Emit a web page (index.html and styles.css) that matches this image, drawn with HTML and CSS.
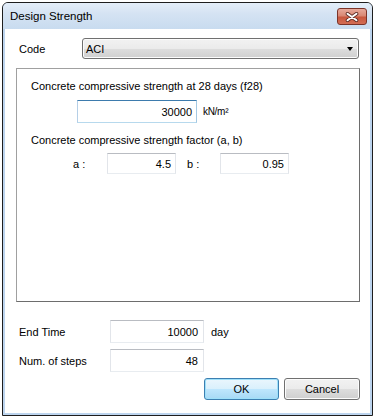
FILE: index.html
```html
<!DOCTYPE html>
<html lang="en">
<head>
<meta charset="UTF-8">
<title>Design Strength</title>
<link rel="stylesheet" href="styles.css">
</head>
<body>
<div class="window">
    <div class="titlebar">
        <span class="title">Design Strength</span>
        <div class="close">
            <svg width="14" height="10" viewBox="0 0 14 10">
                <path d="M2.5 1.8 L11.5 8.2 M11.5 1.8 L2.5 8.2" stroke="#5a2a24" stroke-width="3.6" stroke-linecap="round"/>
                <path d="M2.5 1.8 L11.5 8.2 M11.5 1.8 L2.5 8.2" stroke="#ffffff" stroke-width="2" stroke-linecap="round"/>
            </svg>
        </div>
    </div>
    <div class="client">
        <div class="code-row">
            <span class="lbl">Code</span>
            <div class="combo">
                <span>ACI</span>
                <span class="arrow"></span>
            </div>
        </div>
        <div class="group">
            <p class="caption">Concrete compressive strength at 28 days (f28)</p>
            <div class="f28-row">
                <div class="field focused">30000</div>
                <span class="unit">kN/m²</span>
            </div>
            <p class="caption second">Concrete compressive strength factor (a, b)</p>
            <div class="ab-row">
                <span class="ab-lbl">a :</span>
                <div class="field small">4.5</div>
                <span class="ab-lbl b">b :</span>
                <div class="field small">0.95</div>
            </div>
        </div>
        <div class="param-row first">
            <span class="lbl param">End Time</span>
            <div class="field wide">10000</div>
            <span class="unit-day">day</span>
        </div>
        <div class="param-row">
            <span class="lbl param">Num. of steps</span>
            <div class="field wide">48</div>
        </div>
        <div class="buttons">
            <div class="btn default">OK</div>
            <div class="btn cancel">Cancel</div>
        </div>
    </div>
</div>
</body>
</html>
```

FILE: styles.css
```css
body {
    margin: 0;
    background: #ffffff;
    font-family: "Liberation Sans", Arial, sans-serif;
    font-size: 11px;
    color: #000000;
}
.window {
    margin: 2px 0 0 2px;
    width: 371px;
    height: 414px;
    box-sizing: border-box;
    border: 1px solid #1e1e1e;
    border-radius: 6px 6px 0 0;
    background: #bcd4ee;
    display: flex;
    flex-direction: column;
    overflow: hidden;
}
.titlebar {
    height: 26px;
    flex: none;
    display: flex;
    justify-content: space-between;
    align-items: flex-start;
    padding: 0 5px 0 7px;
    background: linear-gradient(to bottom, #e4eef9 0%, #d5e3f3 40%, #c8dbef 100%);
}
.title {
    font-size: 11.5px;
    line-height: 14px;
    margin-top: 6px;
}
.close {
    margin-top: 5px;
    width: 30px;
    height: 17px;
    box-sizing: border-box;
    border: 1px solid #7b3328;
    border-radius: 3px;
    background: linear-gradient(to bottom, #e7a99b 0%, #d98874 45%, #c8573e 55%, #d36e55 100%);
    display: flex;
    justify-content: center;
    align-items: center;
}
.client {
    flex: 1;
    margin: 0 2px 2px 2px;
    background: #ffffff;
    padding: 9px 10px 0 11px;
    box-sizing: border-box;
}
.lbl {
    padding-left: 3px;
}
.code-row {
    display: flex;
    align-items: center;
}
.code-row .lbl {
    width: 63px;
}
.combo {
    width: 277px;
    height: 21px;
    box-sizing: border-box;
    border: 1px solid #707070;
    border-radius: 3px;
    background: linear-gradient(to bottom, #f2f2f2 0%, #ebebeb 50%, #dddddd 51%, #cfcfcf 100%);
    display: flex;
    align-items: center;
    justify-content: space-between;
    padding: 0 5px 0 3px;
    box-shadow: inset 0 0 0 1px #fcfcfc;
}
.arrow {
    width: 0;
    height: 0;
    border-left: 3.5px solid transparent;
    border-right: 3.5px solid transparent;
    border-top: 4px solid #000000;
}
.group {
    margin-top: 9px;
    height: 234px;
    box-sizing: border-box;
    border: 1px solid;
    border-color: #a0a0a0 #6d6d6d #6d6d6d #a0a0a0;
    padding: 10px 0 0 14px;
}
.caption {
    margin: 0;
    line-height: 15px;
}
.caption.second {
    margin-top: 10px;
}
.field {
    height: 23px;
    box-sizing: border-box;
    border: 1px solid;
    border-color: #b9bcc2 #e2e5ea #e8ecf0 #e2e5ea;
    display: flex;
    align-items: center;
    justify-content: flex-end;
    padding-right: 4px;
    background: #ffffff;
}
.field.focused {
    border-color: #3d7bad #a4c9e3 #b7d9ed #b5cfe7;
}
.f28-row {
    display: flex;
    align-items: center;
    margin: 6px 0 0 46px;
}
.f28-row .field {
    width: 120px;
}
.unit {
    margin-left: 6px;
    font-size: 10px;
    letter-spacing: -0.3px;
}
.ab-row {
    display: flex;
    align-items: center;
    margin: 5px 0 0 42px;
}
.ab-lbl {
    width: 34px;
}
.ab-lbl.b {
    width: 33px;
    margin-left: 11px;
}
.field.small {
    width: 69px;
    height: 21px;
}
.param-row {
    display: flex;
    align-items: center;
    margin-top: 6px;
}
.param-row.first {
    margin-top: 18px;
}
.param {
    width: 91px;
}
.field.wide {
    width: 94px;
    padding-right: 5px;
}
.unit-day {
    margin-left: 7px;
}
.buttons {
    display: flex;
    justify-content: flex-end;
    gap: 5px;
    margin-top: 6px;
}
.btn {
    height: 22px;
    box-sizing: border-box;
    border: 1px solid #707070;
    border-radius: 3px;
    background: linear-gradient(to bottom, #f2f2f2 0%, #ebebeb 50%, #dddddd 51%, #cfcfcf 100%);
    box-shadow: inset 0 0 0 1px #fcfcfc;
    display: flex;
    align-items: center;
    justify-content: center;
}
.btn.default {
    width: 75px;
    border-color: #3c7fb1;
    background: linear-gradient(to bottom, #eaf6fd 0%, #d9f0fc 50%, #bee6fd 51%, #a7d9f5 100%);
    box-shadow: inset 0 0 0 1px #9ee0fa;
}
.btn.cancel {
    width: 76px;
}
```
